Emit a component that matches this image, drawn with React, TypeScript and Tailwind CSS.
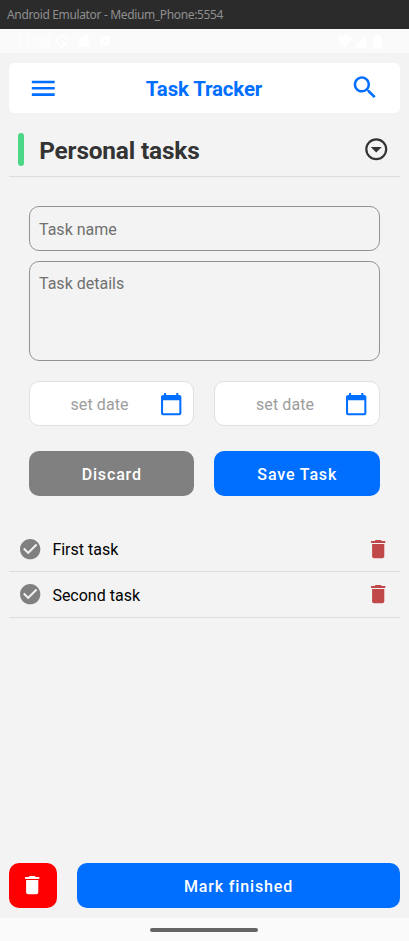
import type { ReactNode } from "react";

const paths = {
  menu: "M3 18h18v-2H3v2zm0-5h18v-2H3v2zm0-7v2h18V6H3z",
  search:
    "M15.5 14h-.79l-.28-.27C15.41 12.59 16 11.11 16 9.5 16 5.91 13.09 3 9.5 3S3 5.91 3 9.5 5.91 16 9.5 16c1.61 0 3.09-.59 4.23-1.57l.27.28v.79l5 4.99L20.49 19l-4.99-5zm-6 0C7.01 14 5 11.99 5 9.5S7.01 5 9.5 5 14 7.01 14 9.5 11.99 14 9.5 14z",
  drop: "M12 20a8 8 0 0 1-8-8 8 8 0 0 1 8-8 8 8 0 0 1 8 8 8 8 0 0 1-8 8m0-18A10 10 0 0 0 2 12a10 10 0 0 0 10 10 10 10 0 0 0 10-10A10 10 0 0 0 12 2M7 10l5 5 5-5H7z",
  calendar:
    "M20 3h-1V1h-2v2H7V1H5v2H4c-1.1 0-2 .9-2 2v16c0 1.1.9 2 2 2h16c1.1 0 2-.9 2-2V5c0-1.1-.9-2-2-2zm0 18H4V8h16v13z",
  check:
    "M12 2C6.5 2 2 6.5 2 12s4.5 10 10 10 10-4.5 10-10S17.5 2 12 2m-2 15l-5-5 1.41-1.41L10 14.17l7.59-7.59L19 8l-9 9z",
  trash: "M6 19c0 1.1.9 2 2 2h8c1.1 0 2-.9 2-2V7H6v12zM19 4h-3.5l-1-1h-5l-1 1H5v2h14V4z",
  shield:
    "M12 1L2 5v6c0 5.55 4.3 10.74 10 12 5.7-1.26 10-6.45 10-12V5L12 1zm0 2.5L19.5 6.5V11c0 1.7-.4 3.3-1.2 4.7L9 7.5l4 7-1 5.5C7.5 18.5 4.5 15 4.5 11V6.5L12 3.5z",
  sd: "M18 2h-8L4 8v12c0 1.1.9 2 2 2h12c1.1 0 2-.9 2-2V4c0-1.1-.9-2-2-2z",
  badge:
    "M5 2h14a2 2 0 0 1 2 2v16a2 2 0 0 1-2 2H5a2 2 0 0 1-2-2V4a2 2 0 0 1 2-2zm7 5l-5 10h2l1-2h4l1 2h2L12 7z",
  wifi: "M12 22L0 7c3-3 7.5-5 12-5s9 2 12 5L12 22z",
  signal: "M1 23h22V1z",
  battery:
    "M17 4h-2V1H9v3H7C5.9 4 5 4.9 5 6v15c0 1.1.9 2 2 2h10c1.1 0 2-.9 2-2V6c0-1.1-.9-2-2-2z",
};

function Icon({ name, className }: { name: keyof typeof paths; className: string }) {
  return (
    <svg viewBox="0 0 24 24" fill="currentColor" fillRule="evenodd" className={`shrink-0 ${className}`}>
      <path d={paths[name]} />
    </svg>
  );
}

function DateField() {
  return (
    <button className="flex h-[45px] flex-1 items-center rounded-[10px] border border-[#e0e0e0] bg-white pr-[10px]">
      <span className="flex-1 pt-[2px] pl-[11px] text-center text-[16px] tracking-[0.1px] text-[#9d9d9d]">
        set date
      </span>
      <Icon name="calendar" className="size-[24.4px] text-[#006eff]" />
    </button>
  );
}

function Button({ className, children }: { className: string; children: ReactNode }) {
  return (
    <button
      className={`flex h-[45px] items-center justify-center rounded-[10px] text-[16px] font-medium tracking-[0.85px] text-white ${className}`}
    >
      {children}
    </button>
  );
}

function TaskRow({ label }: { label: string }) {
  return (
    <div className="flex h-[45.7px] items-center border-b border-[#dcdcdc] pr-[9.5px] pl-[9.7px]">
      <Icon name="check" className="size-[24.4px] text-[#808080]" />
      <span className="flex-1 pt-[2px] pl-[9.8px] text-[16px] text-black">{label}</span>
      <Icon name="trash" className="size-[24.4px] text-[#c04848]" />
    </div>
  );
}

export default function App() {
  return (
    <div className="flex h-[941px] w-[409px] flex-col overflow-hidden bg-[#f3f3f3] font-['Roboto',sans-serif]">
      <div className="flex h-[29px] shrink-0 items-center bg-[#2b2b2b] pl-[7px] font-['Noto_Sans',sans-serif] text-[12px] text-[#8f8f8f]">
        <span className="whitespace-nowrap tracking-[-0.35px]">Android Emulator - Medium_Phone:5554</span>
      </div>
      <div className="flex h-[24px] shrink-0 items-center bg-[#fafafa] pr-[24px] pl-[16px] text-white">
        <span className="text-[14px]">11:00</span>
        <Icon name="shield" className="ml-[4px] size-[14px]" />
        <Icon name="sd" className="ml-[8px] size-[14px]" />
        <Icon name="badge" className="ml-[8px] size-[12px]" />
        <span className="flex-1" />
        <Icon name="wifi" className="size-[15px]" />
        <Icon name="signal" className="ml-[1px] size-[14px]" />
        <Icon name="battery" className="ml-[3px] size-[15px]" />
      </div>

      <main className="flex min-h-0 flex-1 flex-col pt-[9.5px] pr-[9.5px] pb-[10px] pl-[8.5px]">
        <header className="flex h-[50.7px] shrink-0 items-center justify-between rounded-[5px] bg-white pr-[20px] pl-[19.5px]">
          <Icon name="menu" className="size-[30.5px] text-[#006eff]" />
          <h1 className="pt-[2px] text-[20.4px] font-bold tracking-[-0.12px] text-[#006eff]">Task Tracker</h1>
          <Icon name="search" className="size-[30px] -translate-y-[0.5px] text-[#006eff]" />
        </header>

        <section className="mt-[10px] flex h-[53.6px] shrink-0 items-center border-b border-[#dcdcdc] pr-[10px] pl-[9.7px]">
          <span className="h-[32.5px] w-[6px] rounded-[3px] bg-[#4cd787]" />
          <h2 className="flex-1 pt-[3px] pl-[15px] text-[24.4px] font-bold tracking-[-0.16px] text-[#333333]">
            Personal tasks
          </h2>
          <Icon name="drop" className="size-[26.5px] text-[#333333]" />
        </section>

        <form className="flex shrink-0 flex-col px-[20px] pt-[29.7px]">
          <div className="flex h-[45px] items-center rounded-[10px] border border-[#929292] pt-[2px] pl-[9.5px] text-[16px] text-[#707070]">
            Task name
          </div>
          <div className="mt-[10px] h-[100px] rounded-[10px] border border-[#929292] pt-[10px] pl-[9.5px] text-[16px] text-[#707070]">
            Task details
          </div>
          <div className="mt-[20px] flex gap-[20px]">
            <DateField />
            <DateField />
          </div>
          <div className="mt-[25px] flex gap-[20px]">
            <Button className="flex-1 bg-[#808080] pt-[2px] pl-px">Discard</Button>
            <Button className="flex-1 bg-[#006eff] pt-[2px] pl-px">Save Task</Button>
          </div>
        </form>

        <div className="mt-[30px] flex flex-col">
          <TaskRow label="First task" />
          <TaskRow label="Second task" />
        </div>

        <footer className="mt-auto flex gap-[20px]">
          <Button className="w-[48px] bg-[#ff0000]">
            <Icon name="trash" className="size-[24.4px]" />
          </Button>
          <Button className="flex-1 bg-[#006eff] pt-[2px] pl-px">Mark finished</Button>
        </footer>
      </main>

      <nav className="flex h-[23px] shrink-0 items-center justify-center bg-[#fafafa] pr-px">
        <span className="h-[4px] w-[108px] rounded-full bg-[#656565]" />
      </nav>
    </div>
  );
}
